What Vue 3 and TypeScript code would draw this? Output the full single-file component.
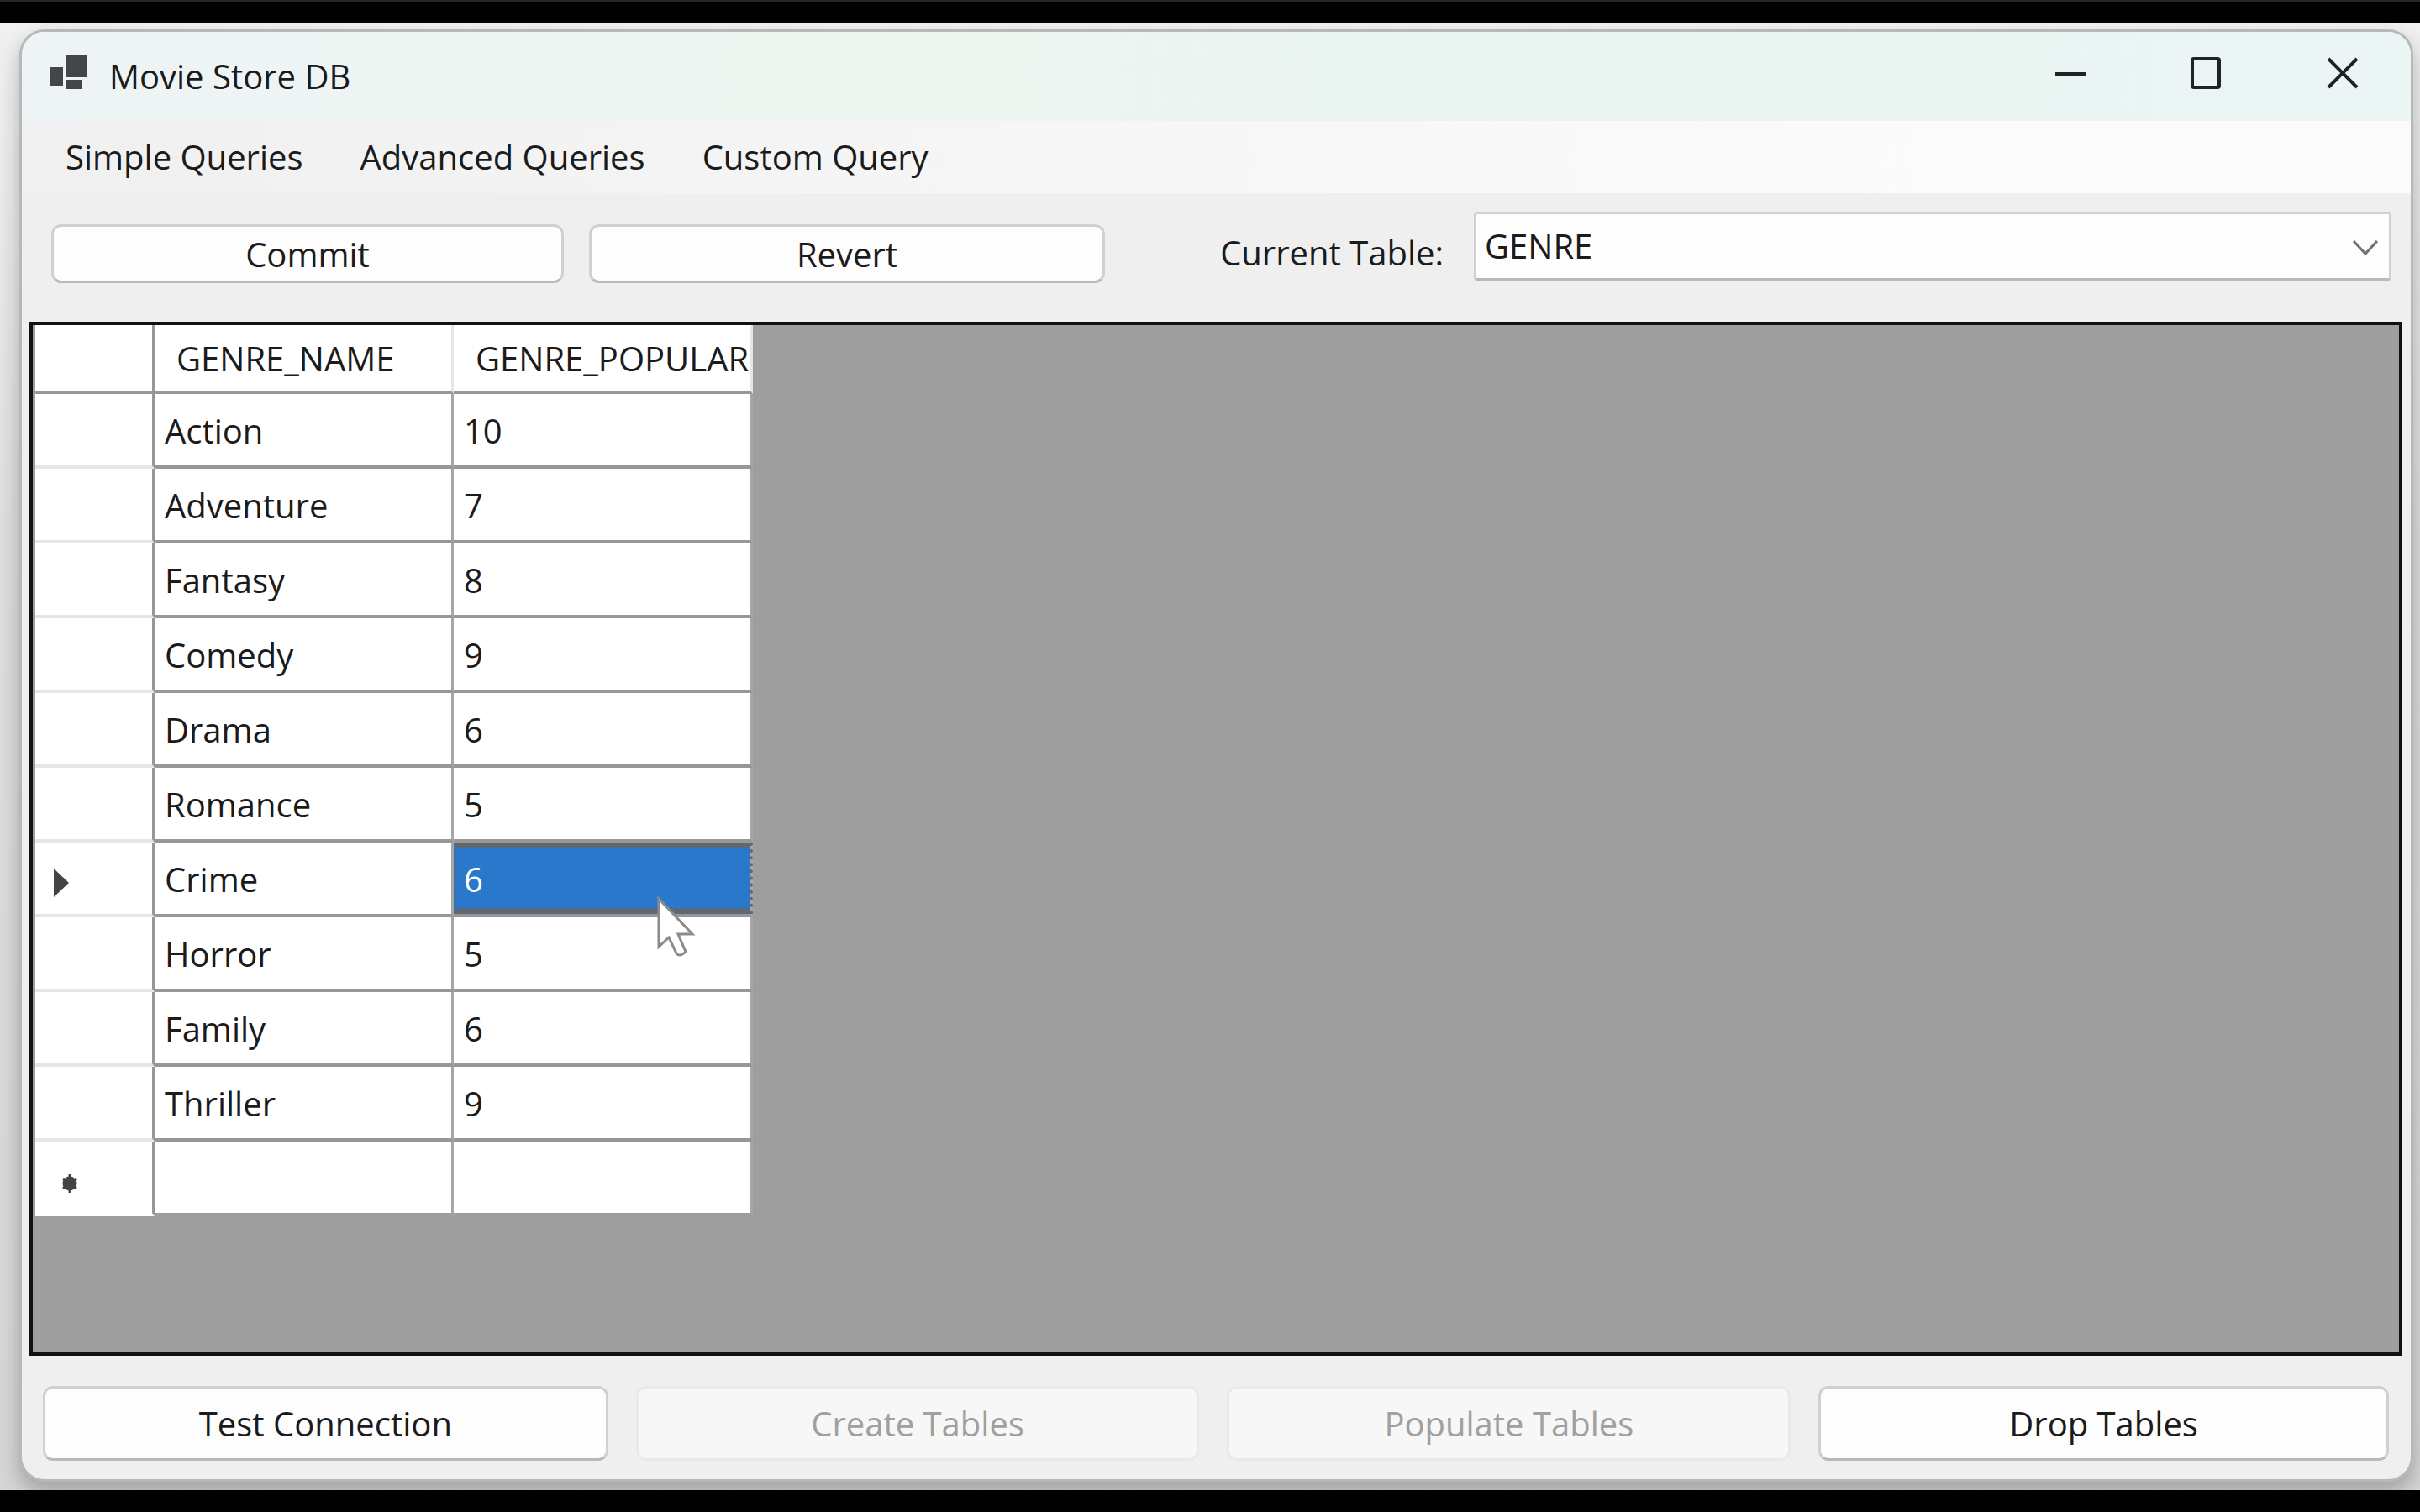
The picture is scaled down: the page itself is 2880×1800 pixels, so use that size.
<script setup lang="ts">
import { ref } from 'vue'

interface Genre {
  name: string
  popularity: string
}

const menus: string[] = ['Simple Queries', 'Advanced Queries', 'Custom Query']
const tables: string[] = ['GENRE']
const currentTable = ref('GENRE')
const selectedRow = ref(6)

const genres: Genre[] = [
  { name: 'Action', popularity: '10' },
  { name: 'Adventure', popularity: '7' },
  { name: 'Fantasy', popularity: '8' },
  { name: 'Comedy', popularity: '9' },
  { name: 'Drama', popularity: '6' },
  { name: 'Romance', popularity: '5' },
  { name: 'Crime', popularity: '6' },
  { name: 'Horror', popularity: '5' },
  { name: 'Family', popularity: '6' },
  { name: 'Thriller', popularity: '9' },
]

const actions = [
  { label: 'Test Connection', disabled: false },
  { label: 'Create Tables', disabled: true },
  { label: 'Populate Tables', disabled: true },
  { label: 'Drop Tables', disabled: false },
]
</script>

<template>
  <div class="screen">
    <div class="desktop">
      <main class="window">
        <header class="titlebar">
          <svg class="app-icon" width="46" height="40" viewBox="0 0 46 40" aria-hidden="true">
            <rect x="18" y="0" width="26" height="26" />
            <rect x="0" y="14" width="15" height="22" />
            <rect x="18" y="29" width="19" height="11" />
          </svg>
          <h1>Movie Store DB</h1>
          <div class="caption-buttons">
            <button type="button" aria-label="Minimize">
              <svg width="40" height="40" viewBox="0 0 40 40"><path d="M2 21H38" /></svg>
            </button>
            <button type="button" aria-label="Maximize">
              <svg width="40" height="40" viewBox="0 0 40 40"><rect x="3" y="3" width="32" height="34" rx="2" /></svg>
            </button>
            <button type="button" aria-label="Close">
              <svg width="40" height="40" viewBox="0 0 40 40"><path d="M3 3L37 37M37 3L3 37" /></svg>
            </button>
          </div>
        </header>

        <nav class="menubar">
          <button v-for="menu in menus" :key="menu" type="button">{{ menu }}</button>
        </nav>

        <section class="toolbar">
          <button class="push" type="button">Commit</button>
          <button class="push" type="button">Revert</button>
          <label for="current-table">Current Table:</label>
          <div class="combo">
            <select id="current-table" v-model="currentTable">
              <option v-for="table in tables" :key="table">{{ table }}</option>
            </select>
            <svg width="34" height="22" viewBox="0 0 34 22" aria-hidden="true"><path d="M3 3L17 18L31 3" /></svg>
          </div>
        </section>

        <section class="grid">
          <table>
            <colgroup>
              <col class="col-marker" />
              <col class="col-data" />
              <col class="col-data" />
            </colgroup>
            <thead>
              <tr>
                <th class="marker"></th>
                <th>GENRE_NAME</th>
                <th>GENRE_POPULAR</th>
              </tr>
            </thead>
            <tbody>
              <tr v-for="(genre, i) in genres" :key="genre.name">
                <td class="marker">
                  <svg v-if="i === selectedRow" class="arrow" width="18" height="34" viewBox="0 0 18 34"><path d="M0 0L18 17L0 34Z" /></svg>
                </td>
                <td>{{ genre.name }}</td>
                <td :class="{ selected: i === selectedRow }">
                  {{ genre.popularity }}
                  <svg v-if="i === selectedRow" class="pointer" width="48" height="74" viewBox="0 0 48 74">
                    <path d="M4 3V60L16 49L25 68Q29 73 36 66L27 45H44Z" />
                  </svg>
                </td>
              </tr>
              <tr class="new-row">
                <td class="marker">
                  <svg class="star" width="22" height="24" viewBox="0 0 22 24"><path d="M11 1V23M3 6L19 18M19 6L3 18" /><circle cx="11" cy="12" r="7" /></svg>
                </td>
                <td></td>
                <td></td>
              </tr>
            </tbody>
          </table>
        </section>

        <footer class="actions">
          <button v-for="action in actions" :key="action.label" class="push" type="button" :disabled="action.disabled">
            {{ action.label }}
          </button>
        </footer>
      </main>
    </div>
  </div>
</template>

<style>
body {
  background: #000;
}
</style>

<style scoped>
.screen {
  box-sizing: border-box;
  min-height: 100vh;
  display: flex;
  padding: 25px 0 26px;
  border-top: 2px solid #1f2630;
  background: #000;
  color: #1b1b1b;
  font: 40px/54px 'Open Sans', 'Noto Sans', sans-serif;
}

.screen *,
.screen *::before {
  box-sizing: border-box;
}

button,
select {
  margin: 0;
  color: inherit;
  font: inherit;
}

.desktop {
  flex: 1;
  display: flex;
  padding: 8px 8px 10px 23px;
  background: linear-gradient(#f1f0f1, #dedede 35%, #d6d6d6);
  overflow: hidden;
}

.window {
  flex: 1;
  display: flex;
  flex-direction: column;
  min-width: 0;
  border: 3px solid #b5b9b9;
  border-radius: 30px;
  background: #efefef;
  box-shadow: 0 12px 24px rgba(0, 0, 0, 0.25);
  overflow: hidden;
}

.titlebar {
  height: 106px;
  display: flex;
  align-items: center;
  padding-left: 34px;
  background: linear-gradient(90deg, #eef4f5, #eff5f1 30%, #e9f4f0 60%, #ebf5f4);
}

.app-icon {
  margin-right: 24px;
  margin-bottom: 10px;
  fill: #444547;
}

h1 {
  flex: 1;
  margin: 0;
  font: inherit;
}

.caption-buttons {
  display: flex;
  padding-bottom: 8px;
}

.caption-buttons button {
  width: 162px;
  height: 96px;
  display: flex;
  align-items: center;
  justify-content: center;
  padding: 0;
  border: 0;
  background: none;
}

.caption-buttons svg {
  fill: none;
  stroke: #1c2424;
  stroke-width: 4;
}

.menubar {
  height: 86px;
  display: flex;
  align-items: center;
  gap: 68px;
  padding-left: 52px;
  background: linear-gradient(90deg, #f0f0f0, #fbfbfb 80%);
}

.menubar button {
  padding: 0;
  border: 0;
  background: none;
}

.toolbar {
  display: grid;
  grid-template-columns: 610fr 614fr 379fr 1092fr;
  align-items: start;
  column-gap: 30px;
  padding: 22px 23px 46px 35px;
}

.toolbar .push {
  height: 70px;
  margin-top: 15px;
}

.toolbar label {
  justify-self: end;
  padding: 22px 6px 0 0;
}

.push {
  padding: 2px 0 0;
  border: 3px solid #d0d0d0;
  border-bottom-color: #b9b9b9;
  border-radius: 12px;
  background: #fdfdfd;
}

.push:disabled {
  border-color: #e9e9e9;
  background: #f7f7f7;
  color: #a0a0a0;
}

.combo {
  position: relative;
}

.combo select {
  display: block;
  width: 100%;
  height: 82px;
  padding: 0 80px 0 10px;
  appearance: none;
  border: 3px solid #d0d0d0;
  border-bottom-color: #b9b9b9;
  border-radius: 4px;
  background: #fdfdfd;
}

.combo svg {
  position: absolute;
  top: 32px;
  right: 14px;
  fill: none;
  stroke: #707070;
  stroke-width: 3;
  pointer-events: none;
}

.grid {
  flex: 1;
  margin: 0 10px 0 9px;
  padding-left: 3px;
  border: 4px solid #111;
  background: #9e9e9e;
}

table {
  border-collapse: separate;
  border-spacing: 0;
  table-layout: fixed;
  width: 854px;
}

.col-marker {
  width: 142px;
}

.col-data {
  width: 356px;
}

th,
td {
  position: relative;
  padding: 2px 0 0 12px;
  border-right: 3px solid #a6a6a6;
  border-bottom: 4px solid #979797;
  background: #fff;
  text-align: left;
  font-weight: 400;
}

th {
  height: 82px;
  padding-left: 26px;
  border-right-color: #e6e6e6;
}

th.marker {
  border-right-color: #979797;
}

td {
  height: 89px;
}

td.marker {
  padding-left: 22px;
  border-right-color: #979797;
  border-bottom-color: #e6e6e6;
}

td svg {
  display: block;
  fill: #444;
}

td .arrow {
  margin-top: 8px;
}

.new-row td {
  border-bottom-color: #9e9e9e;
}

.new-row td.marker {
  border-bottom-color: #fff;
}

td .star {
  margin: 12px 0 0 8px;
  stroke: #444;
  stroke-width: 3;
}

td.selected {
  background: #2a78cb;
  color: #fff;
}

td.selected::before {
  content: '';
  position: absolute;
  inset: 0 -3px 0 0;
  border: solid #5d6a76;
  border-width: 7px 4px;
  border-left-style: dotted;
  border-right-style: dotted;
}

td .pointer {
  position: absolute;
  z-index: 1;
  left: 240px;
  top: 64px;
  fill: #fff;
  stroke: #8b8b8b;
  stroke-width: 3;
}

.actions {
  display: grid;
  grid-template-columns: 672fr 670fr 670fr 678fr;
  gap: 33px;
  padding: 36px 26px 22px 25px;
}

.actions .push {
  height: 89px;
  padding: 0;
}
</style>
